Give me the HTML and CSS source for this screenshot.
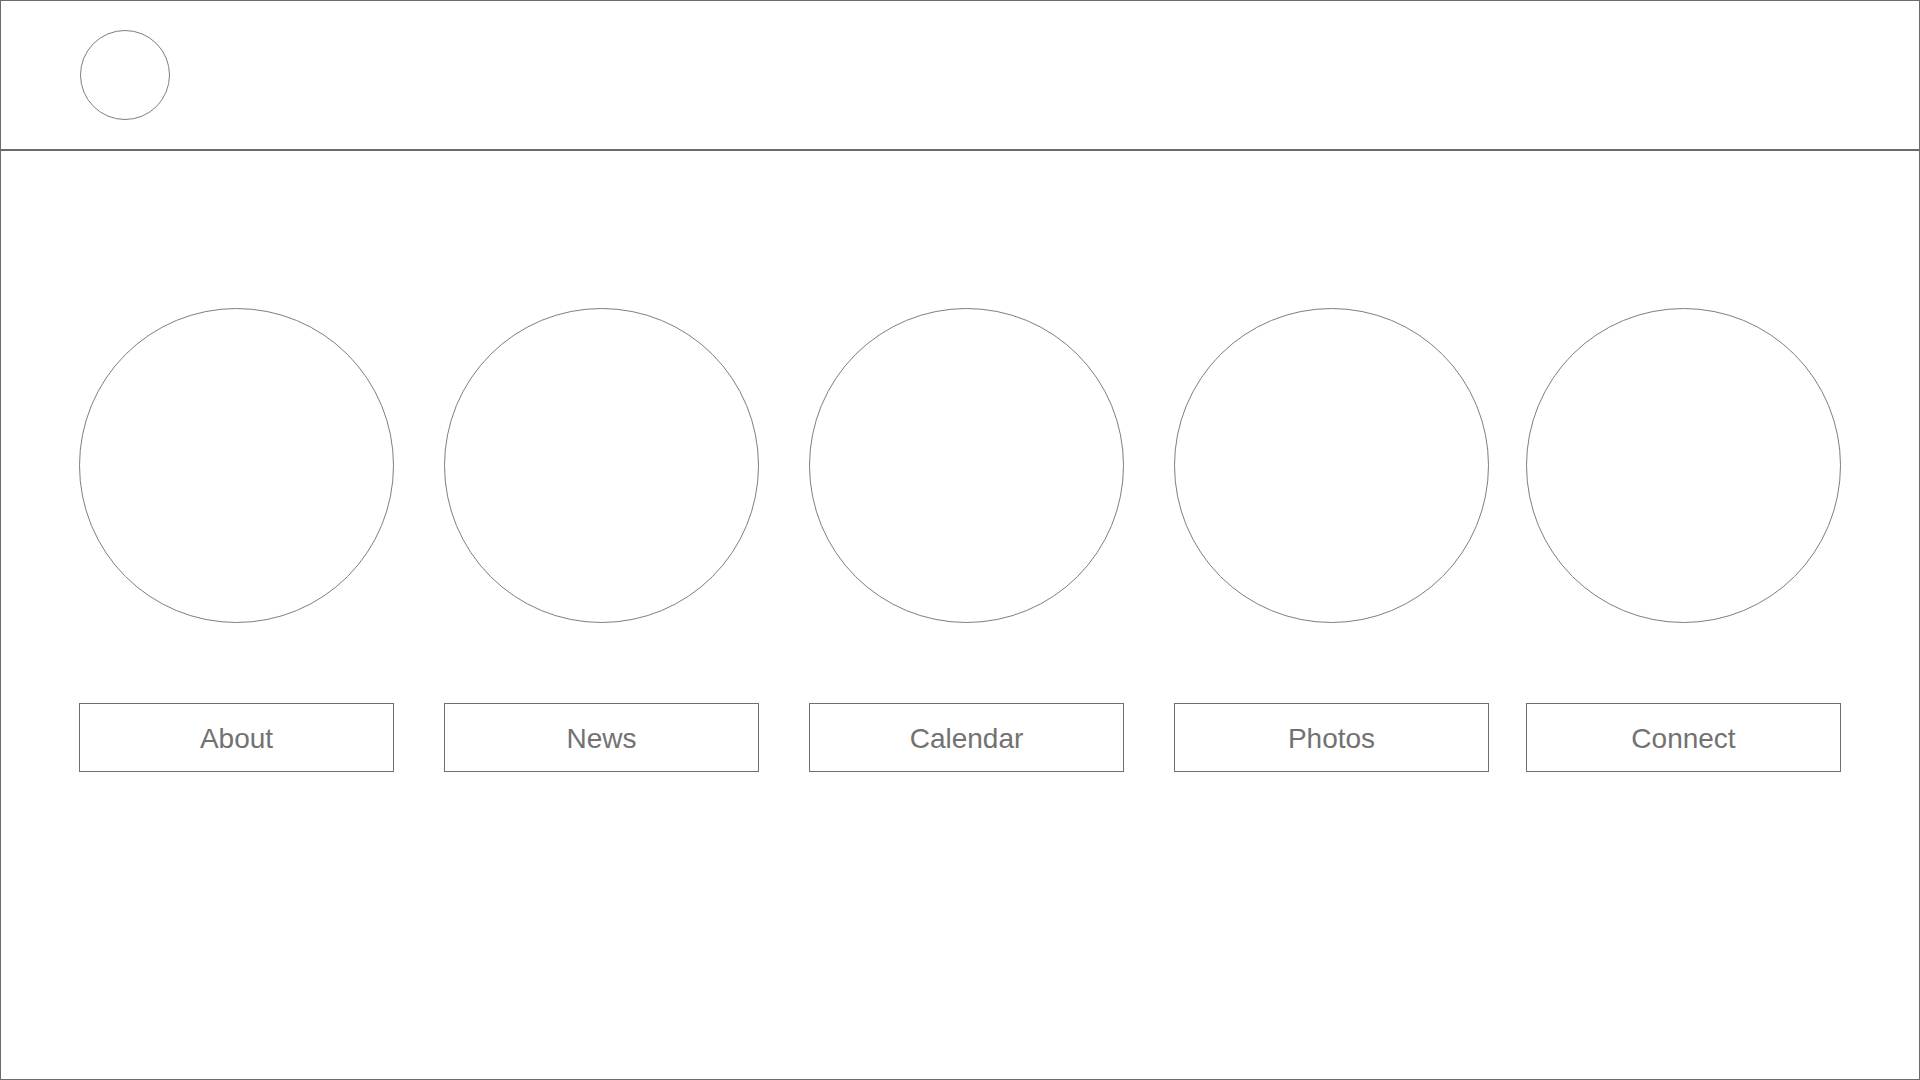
FILE: index.html
```html
<!DOCTYPE html>
<html lang="en">
<head>
    <meta charset="UTF-8">
    <meta name="viewport" content="width=device-width, initial-scale=1.0">
    <title>Home</title>
    <link rel="stylesheet" href="styles.css">
</head>
<body>

<div class="frame">
    <header class="header">
        <div class="logo"></div>
    </header>

    <main class="content">
        <div class="item">
            <div class="picture"></div>
            <a class="nav-button" href="#">About</a>
        </div>
        <div class="item">
            <div class="picture"></div>
            <a class="nav-button" href="#">News</a>
        </div>
        <div class="item">
            <div class="picture"></div>
            <a class="nav-button" href="#">Calendar</a>
        </div>
        <div class="item">
            <div class="picture"></div>
            <a class="nav-button" href="#">Photos</a>
        </div>
        <div class="item">
            <div class="picture"></div>
            <a class="nav-button" href="#">Connect</a>
        </div>
    </main>
</div>

</body>
</html>
```

FILE: styles.css
```css
* {
    box-sizing: border-box;
}

body {
    margin: 0;
    padding: 0;
    background-color: #ffffff;
    font-family: "Liberation Sans", Arial, sans-serif;
}

.frame {
    width: 1920px;
    height: 1080px;
    border: 1px solid #6b6b6b;
    display: flex;
    flex-direction: column;
}

.header {
    height: 150px;
    border-bottom: 2px solid #6b6b6b;
    padding: 29px 0 0 79px;
}

.logo {
    width: 90px;
    height: 90px;
    border: 1px solid #7e7e7e;
    border-radius: 50%;
}

.content {
    display: flex;
    gap: 50px;
    padding: 157px 0 0 78px;
}

/* the last column sits a little closer */
.item:last-child {
    margin-left: -13px;
}

.item {
    width: 315px;
    display: flex;
    flex-direction: column;
}

.picture {
    width: 315px;
    height: 315px;
    border: 1px solid #7e7e7e;
    border-radius: 50%;
}

.nav-button {
    margin-top: 80px;
    height: 69px;
    padding-top: 2px;
    border: 1px solid #6f6f6f;
    display: flex;
    align-items: center;
    justify-content: center;
    font-size: 28px;
    color: #727272;
    text-decoration: none;
}
```
